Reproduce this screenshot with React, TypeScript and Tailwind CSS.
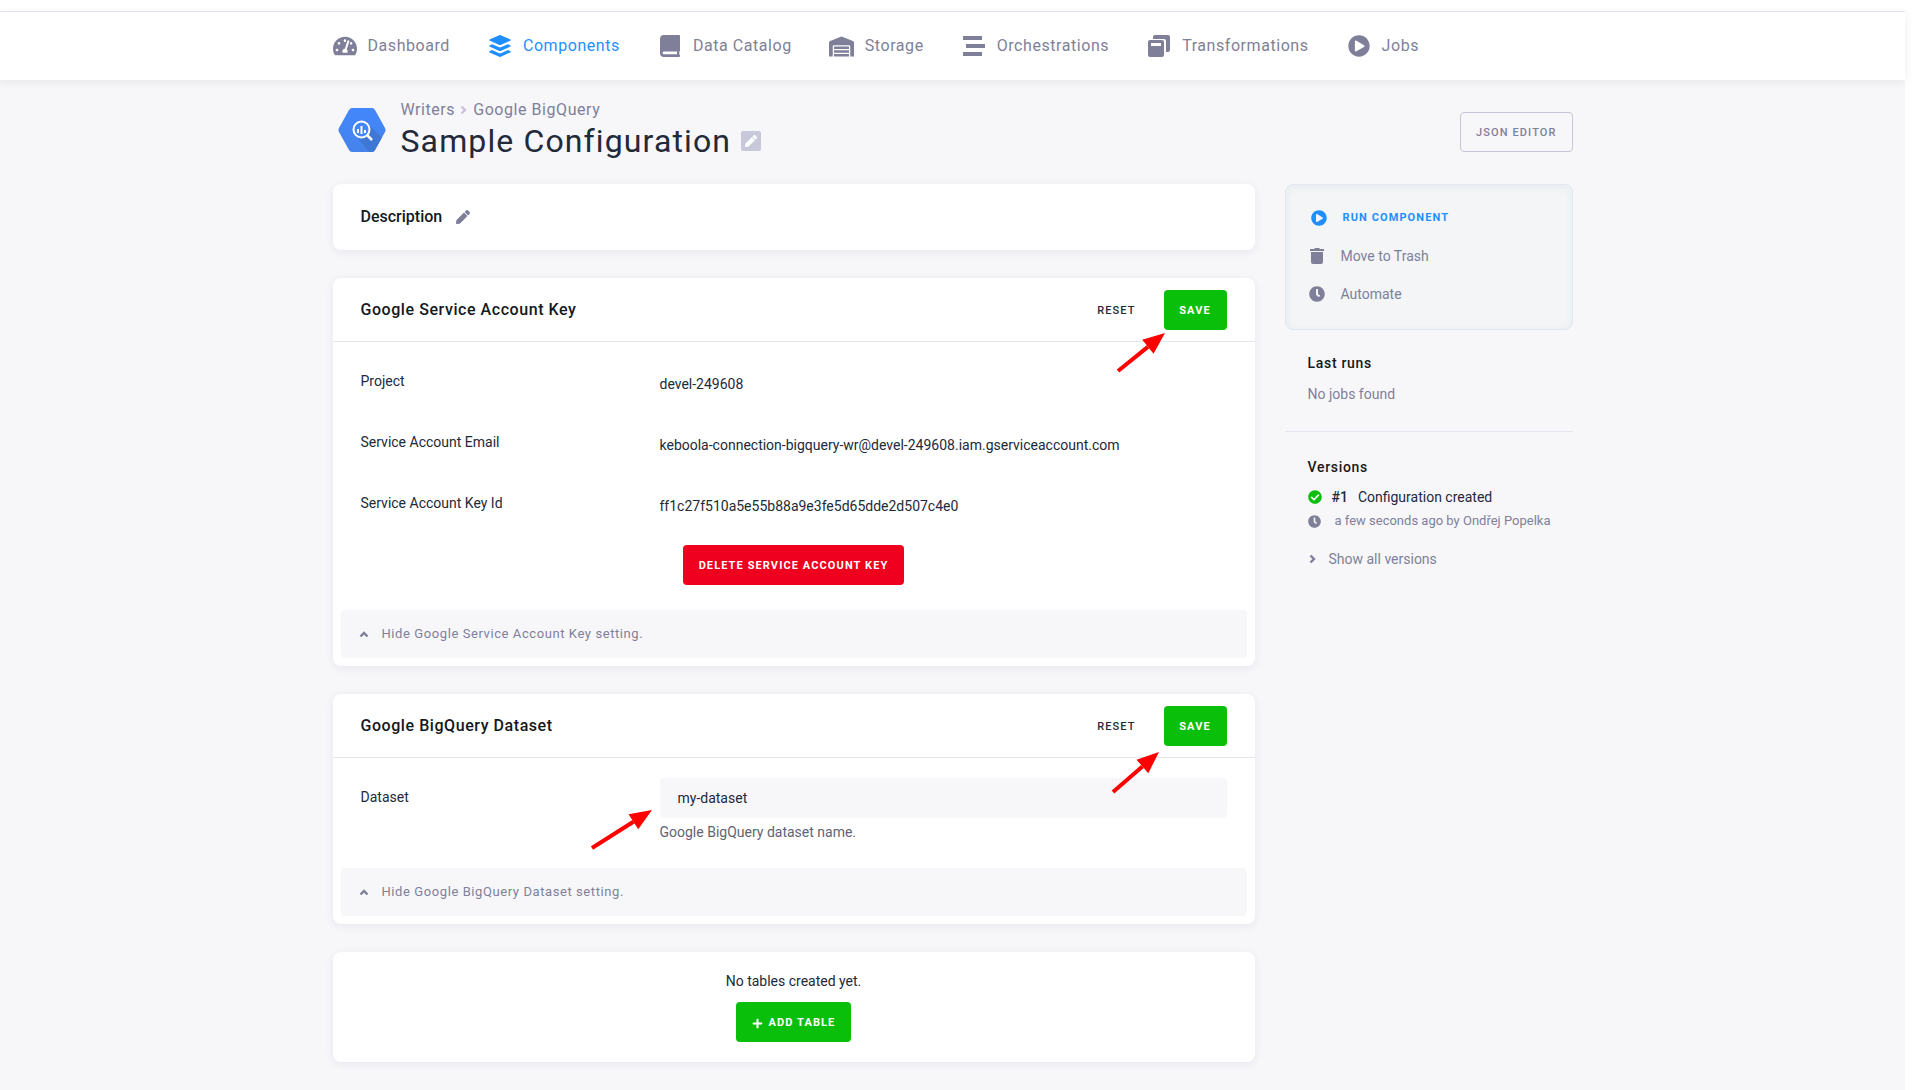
import React from "react";
import { FaTachometerAlt, FaWarehouse, FaPlayCircle, FaCheckCircle, FaClock, FaPen, FaPlus } from "react-icons/fa";

const Layers = () => (
  <svg width="22" height="22" viewBox="0 0 22 22" fill="currentColor" className="shrink-0" aria-hidden="true">
    <path d="M10.3.2a1.600 1.600 0 0 1 1.400 0l9.800 4.300a.6.6 0 0 1 0 1.100l-9.800 4.300a1.600 1.600 0 0 1-1.400 0L.5 5.600a.6.6 0 0 1 0-1.100z" />
    <path d="M.5 10.400l2.600-1.200 6.500 2.900a3.500 3.500 0 0 0 2.800 0l6.500-2.900 2.600 1.200a.6.6 0 0 1 0 1.100l-9.800 4.400a1.600 1.600 0 0 1-1.400 0L.5 11.500a.6.6 0 0 1 0-1.100z" />
    <path d="M.5 16.300l2.600-1.200 6.500 2.900a3.500 3.500 0 0 0 2.800 0l6.500-2.900 2.600 1.200a.6.6 0 0 1 0 1.100l-9.800 4.400a1.600 1.600 0 0 1-1.400 0L.5 17.400a.6.6 0 0 1 0-1.100z" />
  </svg>
);

const Book = () => (
  <svg width="20" height="22" viewBox="0 0 20 22" fill="currentColor" className="shrink-0" aria-hidden="true">
    <path fillRule="evenodd" d="M4 0h15a1 1 0 0 1 1 1v14.500a1 1 0 0 1-.6.9c-.2 1-.2 2.200 0 3.200.4.200.6.500.6.900v.5a1 1 0 0 1-1 1H4a4 4 0 0 1-4-4V4a4 4 0 0 1 4-4zM4 16.500a1.400 1.400 0 0 0 0 2.800h13v-2.800z" />
  </svg>
);

const Bars = () => (
  <svg width="22" height="20" viewBox="0 0 22 20" fill="currentColor" className="shrink-0" aria-hidden="true">
    <path d="M0 0h19v4H0zM3 8h19v4H3zM0 16h19v4H0z" />
  </svg>
);

const Copies = () => (
  <svg width="22" height="22" viewBox="0 0 22 22" fill="currentColor" className="shrink-0" aria-hidden="true">
    <path d="M7 0h13a2 2 0 0 1 2 2v13a2 2 0 0 1-2 2h-2V6a2 2 0 0 0-2-2H5V2a2 2 0 0 1 2-2z" />
    <path fillRule="evenodd" d="M2 5h12a2 2 0 0 1 2 2v13a2 2 0 0 1-2 2H2a2 2 0 0 1-2-2V7a2 2 0 0 1 2-2zM3 8v3h10V8z" />
  </svg>
);

const Chevron = ({ className = "" }: { className?: string }) => (
  <svg viewBox="0 0 10 10" fill="none" stroke="currentColor" strokeWidth="2.4" className={`size-2.5 shrink-0 ${className}`} aria-hidden="true">
    <path d="M2.500 1.500L6 5L2.500 8.500" />
  </svg>
);

const Trash = () => (
  <svg width="14" height="16" viewBox="0 0 14 16" fill="currentColor" aria-hidden="true">
    <path d="M0 1h4l1-1h4l1 1h4v2H0zM1 4h12v10a2 2 0 0 1-2 2H3a2 2 0 0 1-2-2z" />
  </svg>
);

const Logo = () => (
  <svg width="48" height="44" viewBox="0 0 48 44" className="shrink-0" aria-hidden="true">
    <defs>
      <linearGradient id="hex" x1="0" y1="0" x2="0" y2="1">
        <stop offset="0" stopColor="#4387fd" />
        <stop offset="1" stopColor="#4683ea" />
      </linearGradient>
      <clipPath id="hexclip">
        <path d="M14 0h20a4 4 0 0 1 3 2l10 18a4 4 0 0 1 0 4L37 42a4 4 0 0 1-3 2H14a4 4 0 0 1-3-2L1 24a4 4 0 0 1 0-4L11 2a4 4 0 0 1 3-2z" />
      </clipPath>
    </defs>
    <g clipPath="url(#hexclip)">
      <path d="M0 0h48v44H0z" fill="url(#hex)" />
      <path d="M30 16l18 18v10H31L18 28z" fill="#3f78d4" />
      <circle cx="23.5" cy="21.5" r="8" fill="#4386fa" stroke="#fff" strokeWidth="2" />
      <path d="M29 27l5 5" stroke="#fff" strokeWidth="2.5" />
      <path d="M20 21v4M23.500 18v8M27 22v3" stroke="#fff" strokeWidth="2" />
    </g>
  </svg>
);

const nav = [
  { label: "Dashboard", icon: <FaTachometerAlt size={24} className="shrink-0" /> },
  { label: "Components", icon: <Layers />, active: true },
  { label: "Data Catalog", icon: <Book /> },
  { label: "Storage", icon: <FaWarehouse size={25} className="shrink-0" /> },
  { label: "Orchestrations", icon: <Bars /> },
  { label: "Transformations", icon: <Copies /> },
  { label: "Jobs", icon: <FaPlayCircle size={22} className="shrink-0" /> },
];

const card = "relative rounded-lg bg-white shadow-[0_2px_8px_rgba(34,50,84,0.08)]";
const button = "inline-flex h-10 items-center justify-center rounded pt-0.5 text-[11px] tracking-widest";
const greenButton = `${button} bg-[#09bf09] font-bold text-white`;

/* Red pointer drawn from the svg's own corner to (x, y). */
function Arrow({ className, x, y }: { className: string; x: number; y: number }) {
  const len = Math.hypot(x, y);
  const ux = x / len;
  const uy = y / len;
  const bx = x - ux * 22;
  const by = y - uy * 22;
  const head = `${x},${y} ${bx - uy * 9},${by + ux * 9} ${bx + uy * 9},${by - ux * 9}`;
  return (
    <svg width="1" height="1" className={`pointer-events-none absolute overflow-visible ${className}`} aria-hidden="true">
      <path d={`M0 0L${bx} ${by}`} stroke="#f00" strokeWidth="4" />
      <polygon points={head} fill="#f00" />
    </svg>
  );
}

function CardHeader({ title }: { title: string }) {
  return (
    <header className="flex h-16 items-center border-b border-[#e3e6ee] px-7">
      <h2 className="flex-1 text-base font-medium tracking-[0.035em] text-[#141821]">{title}</h2>
      <button className={`${button} mr-7 font-medium`}>RESET</button>
      <button className={`${greenButton} w-[63px]`}>SAVE</button>
    </header>
  );
}

function HideBar({ text }: { text: string }) {
  return (
    <button className="flex h-12 w-full items-center gap-[13px] rounded bg-[#f7f7fa] px-[18px] text-[13px] tracking-[0.045em] text-[#807f99]">
      <Chevron className="-rotate-90" />
      {text}
    </button>
  );
}

const details = [
  ["Project", "devel-249608"],
  ["Service Account Email", "keboola-connection-bigquery-wr@devel-249608.iam.gserviceaccount.com"],
  ["Service Account Key Id", "ff1c27f510a5e55b88a9e3fe5d65dde2d507c4e0"],
];

export default function App() {
  return (
    <div className="min-h-screen bg-white pr-[15px] font-['Roboto',sans-serif] text-sm text-[#222939]">
      <div className="min-h-screen bg-[#f7f7fa]">
        <div className="h-3 border-b border-[#e3e6ee] bg-white" />
        <nav className="bg-white shadow-[0_2px_10px_rgba(0,0,0,0.07)]">
          <div className="mx-auto flex h-17 max-w-[1240px] items-center gap-[39px] pl-px text-base tracking-[0.035em]">
            {nav.map((n) => (
              <a key={n.label} href="#" className={`flex items-center gap-3 whitespace-nowrap ${n.active ? "text-[#1f8fff]" : "text-[#807f99]"}`}>
                <span className="flex h-6 w-[22px] items-center justify-center">{n.icon}</span>
                {n.label}
              </a>
            ))}
          </div>
        </nav>

        <div className="mx-auto max-w-[1240px]">
          <header className="flex h-[104px] items-center pl-[5px]">
            <div className="flex flex-1 items-center gap-[15px] pb-1">
              <Logo />
              <div className="pb-0.5">
                <div className="flex items-center gap-1 text-base tracking-[0.035em] text-[#807f99]">
                  <a href="#">Writers</a>
                  <Chevron className="text-[#c5c7d9]" />
                  <a href="#">Google BigQuery</a>
                </div>
                <div className="flex items-center gap-2.5">
                  <h1 className="text-[32px] leading-[38px] tracking-[0.035em]">Sample Configuration</h1>
                  <button aria-label="Rename configuration" className="flex size-5 items-center justify-center rounded-xs bg-[#c8c8da] text-white">
                    <FaPen size={12} />
                  </button>
                </div>
              </div>
            </div>
            <button className={`${button} border border-[#c5c7d9] px-[15px] font-medium text-[#807f99]`}>JSON EDITOR</button>
          </header>

          <div className="flex items-start gap-[30px]">
            <main className="flex min-w-0 flex-1 flex-col gap-7">
              <section className={`${card} flex items-center gap-[14px] px-7 py-[21px]`}>
                <h2 className="text-base font-medium text-[#141821]">Description</h2>
                <button aria-label="Edit description" className="text-[#807f99]">
                  <FaPen size={14} />
                </button>
              </section>

              <section className={card}>
                <CardHeader title="Google Service Account Key" />
                <dl className="flex flex-col gap-[38px] px-7 pt-[29px]">
                  {details.map(([k, v]) => (
                    <div key={k} className="grid grid-cols-[299px_1fr]">
                      <dt>{k}</dt>
                      <dd className="pt-[3px]">{v}</dd>
                    </div>
                  ))}
                </dl>
                <div className="flex justify-center pt-[29px] pb-[25px]">
                  <button className={`${button} bg-[#ee001e] px-4 font-bold text-white`}>DELETE SERVICE ACCOUNT KEY</button>
                </div>
                <div className="px-2 pb-2">
                  <HideBar text="Hide Google Service Account Key setting." />
                </div>
                <Arrow className="top-[93px] right-[136px]" x={47} y={-38} />
              </section>

              <section className={card}>
                <CardHeader title="Google BigQuery Dataset" />
                <div className="grid grid-cols-[299px_1fr] px-7 pt-5 pb-[26px]">
                  <label htmlFor="dataset" className="pt-[9px]">Dataset</label>
                  <div>
                    <input id="dataset" defaultValue="my-dataset" className="block h-10 w-full rounded bg-[#f7f7fa] px-[18px] outline-none" />
                    <p className="mt-1 text-[#5f6378]">Google BigQuery dataset name.</p>
                  </div>
                </div>
                <div className="px-2 pb-2">
                  <HideBar text="Hide Google BigQuery Dataset setting." />
                </div>
                <Arrow className="top-[98px] right-[141px]" x={46} y={-40} />
                <Arrow className="top-[154px] left-[259px]" x={60} y={-38} />
              </section>

              <section className={`${card} flex flex-col items-center gap-[11px] pt-[19px] pb-5`}>
                <p>No tables created yet.</p>
                <button className={`${greenButton} gap-1.5 px-4`}>
                  <FaPlus size={11} />
                  ADD TABLE
                </button>
              </section>
            </main>

            <aside className="w-72">
              <div className="flex h-[146px] flex-col justify-center gap-[18px] rounded-lg border border-[#e0e7f0] bg-[#f3f5f6] px-[23px] pb-0.5 text-[#807f99] shadow-[inset_0_2px_8px_rgba(31,80,140,0.06)]">
                <button className="flex items-center gap-4 pl-0.5 text-[11px] leading-5 font-bold tracking-widest text-[#1f8fff]">
                  <FaPlayCircle size={16} />
                  RUN COMPONENT
                </button>
                <button className="flex items-center gap-4">
                  <span className="flex w-4 justify-center">
                    <Trash />
                  </span>
                  Move to Trash
                </button>
                <button className="flex items-center gap-4">
                  <FaClock size={16} />
                  Automate
                </button>
              </div>
              <section className="border-b border-[#e3e6ee] px-[23px] pt-[23px] pb-[27px]">
                <h3 className="font-medium tracking-wider text-[#141821]">Last runs</h3>
                <p className="mt-[11px] text-[#807f99]">No jobs found</p>
              </section>
              <section className="pt-[25px] pr-3 pl-[23px]">
                <h3 className="font-medium tracking-wider text-[#141821]">Versions</h3>
                <p className="mt-2.5 flex items-center">
                  <FaCheckCircle size={14} className="text-[#09bf09]" />
                  <b className="ml-2.5 font-medium">#1</b>
                  <span className="ml-2.5">Configuration created</span>
                </p>
                <p className="mt-1 flex items-center gap-[14px] text-[13px] leading-5 text-[#807f99]">
                  <FaClock size={13} className="shrink-0" />
                  a few seconds ago by Ondřej Popelka
                </p>
                <a href="#" className="mt-[18px] flex items-center gap-[11px] text-[#807f99]">
                  <Chevron />
                  Show all versions
                </a>
              </section>
            </aside>
          </div>
        </div>
      </div>
    </div>
  );
}
